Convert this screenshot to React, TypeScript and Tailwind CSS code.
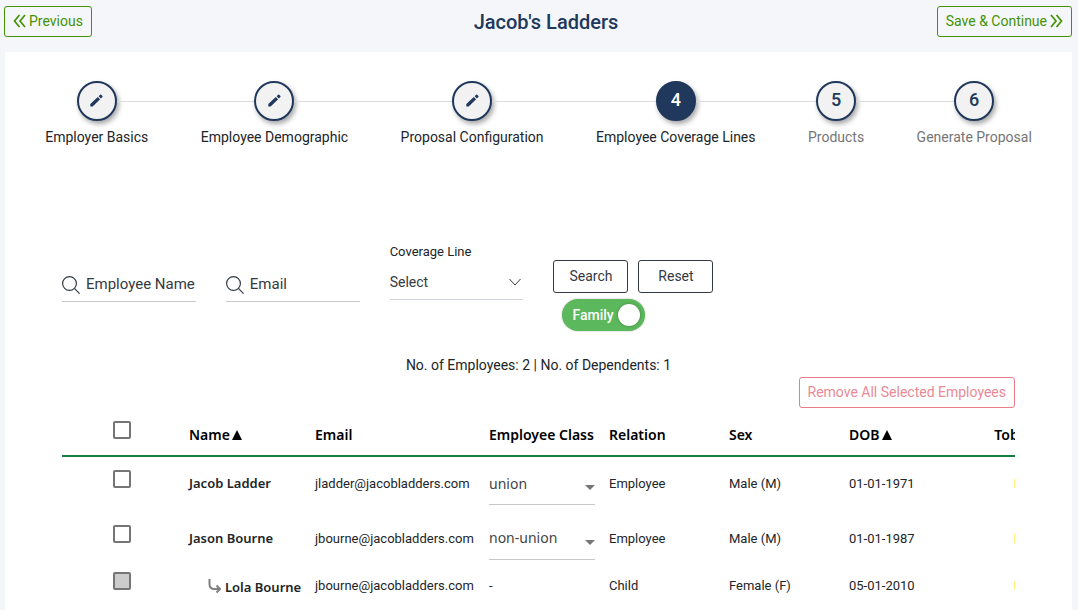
import { useState } from "react";
import { clsx } from "clsx";

type Step = {
  label: string;
  state: "done" | "active" | "upcoming";
};

type Member = {
  id: string;
  name: string;
  email: string;
  employeeClass?: string;
  relation: string;
  sex: string;
  dob: string;
  tobacco: string;
};

const STEPS: Step[] = [
  { label: "Employer Basics", state: "done" },
  { label: "Employee Demographic", state: "done" },
  { label: "Proposal Configuration", state: "done" },
  { label: "Employee Coverage Lines", state: "active" },
  { label: "Products", state: "upcoming" },
  { label: "Generate Proposal", state: "upcoming" },
];

const MEMBERS: Member[] = [
  { id: "1", name: "Jacob Ladder", email: "jladder@jacobladders.com", employeeClass: "union", relation: "Employee", sex: "Male (M)", dob: "01-01-1971", tobacco: "No" },
  { id: "2", name: "Jason Bourne", email: "jbourne@jacobladders.com", employeeClass: "non-union", relation: "Employee", sex: "Male (M)", dob: "01-01-1987", tobacco: "No" },
  { id: "3", name: "Lola Bourne", email: "jbourne@jacobladders.com", relation: "Child", sex: "Female (F)", dob: "05-01-2010", tobacco: "No" },
];

function DoubleChevron({ className }: { className?: string }) {
  return (
    <svg viewBox="0 0 13 14" className={clsx("h-3.5 w-[13px]", className)} fill="none" stroke="currentColor" strokeWidth="1.7" aria-hidden="true">
      <path d="M6.5 1 1.5 7l5 6M12 1 7 7l5 6" />
    </svg>
  );
}

function PencilIcon() {
  return (
    <svg viewBox="0 0 13 13" className="h-[13px] w-[13px]" fill="currentColor" aria-hidden="true">
      <path d="M.3 12.600V10L7.800 3l2.300 2.300-7.400 7.300z" />
      <path d="m8.600 2.300 1.500-1.500q.6-.5 1.200 0l1.100 1.100q.5.600 0 1.200l-1.500 1.500z" />
    </svg>
  );
}

function SearchIcon() {
  return (
    <svg viewBox="0 0 18 18" className="h-[18px] w-[18px] shrink-0" fill="none" stroke="#343a40" strokeWidth="1.2" aria-hidden="true">
      <circle cx="7.5" cy="7.5" r="6.9" />
      <path d="m12.4 12.4 5.2 5.2" />
    </svg>
  );
}

function SortArrow() {
  return (
    <svg viewBox="0 0 10 10" className="ml-0.5 inline-block h-2.5 w-2.5 align-baseline" fill="currentColor" aria-hidden="true">
      <path d="M5 0l5 10H0z" />
    </svg>
  );
}

function Stepper() {
  return (
    <ol className="flex px-3.5 pt-[29px]">
      {STEPS.map((step, i) => (
        <li key={step.label} className="flex flex-auto flex-col items-center">
          <div className="flex w-full items-center">
            <div className={clsx("h-px flex-1", i > 0 && "bg-[#dcdcdc]")} />
            <div
              className={clsx(
                "flex h-10 w-10 items-center justify-center rounded-full border-2 border-[#20385b] pb-0.5 text-lg font-medium shadow-[2px_3px_5px_rgba(0,0,0,0.35)]",
                step.state === "active" ? "bg-[#20385b] text-white" : "bg-[#f2f2f2] text-[#20385b]"
              )}
            >
              {step.state === "done" ? <PencilIcon /> : i + 1}
            </div>
            <div className={clsx("h-px flex-1", i < STEPS.length - 1 && "bg-[#dcdcdc]")} />
          </div>
          <span
            className={clsx(
              "mt-1.5 px-6 text-sm whitespace-nowrap",
              step.state === "upcoming" ? "text-[#757575]" : "text-[#212529]"
            )}
          >
            {step.label}
          </span>
        </li>
      ))}
    </ol>
  );
}

function SearchField({ label }: { label: string }) {
  return (
    <label className="mt-[26px] flex h-[34px] items-center gap-1.5 border-b border-[#c8c8c8]">
      <SearchIcon />
      <input
        type="text"
        aria-label={label}
        placeholder={label}
        className="w-full min-w-0 bg-transparent text-[15px] text-[#343a40] outline-none placeholder:text-[#343a40]"
      />
    </label>
  );
}

function Filters() {
  const [family, setFamily] = useState(true);

  return (
    <form className="mt-[95px] grid grid-cols-6 items-start gap-x-[30px]" onSubmit={(e) => e.preventDefault()}>
      <SearchField label="Employee Name" />
      <SearchField label="Email" />
      <div>
        <label htmlFor="coverage-line" className="block text-[13px] leading-5">
          Coverage Line
        </label>
        <div className="relative mt-0.5">
          <select id="coverage-line" className="h-9 w-full appearance-none border-b border-[#ced4da] bg-transparent text-sm text-[#343a40] outline-none">
            <option>Select</option>
          </select>
          <svg viewBox="0 0 12 8" className="pointer-events-none absolute top-3.5 right-0.5 h-2 w-3" fill="none" stroke="#343a40" aria-hidden="true">
            <path d="m.5 1 5.5 6 5.5-6" />
          </svg>
        </div>
      </div>
      <div className="col-span-2 flex flex-col items-start pt-[18px]">
        <div className="flex gap-2.5">
          <button type="submit" className="h-[33px] w-[75px] rounded-[3px] border border-[#343a40] pb-0.5 text-sm text-[#343a40]">
            Search
          </button>
          <button type="reset" className="h-[33px] w-[75px] rounded-[3px] border border-[#343a40] pb-0.5 text-sm text-[#343a40]">
            Reset
          </button>
        </div>
        <label className="mt-1.5 ml-[9px] flex h-8 w-[83px] cursor-pointer items-center justify-between rounded-full bg-[#5cb85c] pr-[5px] pl-2.5 text-sm font-medium text-white shadow-[0_0_2px_rgba(0,0,0,0.3)]">
          Family
          <input
            type="checkbox"
            role="switch"
            checked={family}
            onChange={(e) => setFamily(e.target.checked)}
            className="h-[22px] w-[22px] appearance-none rounded-full bg-white shadow-[0_0_3px_rgba(0,0,0,0.3)]"
          />
        </label>
      </div>
    </form>
  );
}

function RowCheckbox({ label, disabled }: { label: string; disabled?: boolean }) {
  return (
    <input
      type="checkbox"
      aria-label={label}
      disabled={disabled}
      className="block h-[18px] w-[18px] appearance-none rounded-xs border-2 border-[#757575] checked:bg-[#757575] disabled:bg-[#cccccc]"
    />
  );
}

function ClassSelect({ member }: { member: Member }) {
  return (
    <div className="relative w-[106px]">
      <select
        aria-label={`Employee class for ${member.name}`}
        defaultValue={member.employeeClass}
        className="h-[42px] w-full appearance-none border-b border-[#c8c8c8] bg-transparent font-['Noto_Sans',sans-serif] text-sm text-[#444444] outline-none"
      >
        <option>union</option>
        <option>non-union</option>
      </select>
      <svg viewBox="0 0 10 5" className="pointer-events-none absolute top-[22px] right-0 h-[5px] w-2.5" fill="#757575" aria-hidden="true">
        <path d="M0 0h10L5 5z" />
      </svg>
    </div>
  );
}

function MembersTable() {
  return (
    <div className="overflow-x-hidden">
      <table className="w-[1013px] table-fixed border-collapse text-left text-[13px]">
        <colgroup>
          <col className="w-[127px]" />
          <col className="w-[126px]" />
          <col className="w-[174px]" />
          <col className="w-[120px]" />
          <col className="w-[120px]" />
          <col className="w-[120px]" />
          <col className="w-[120px]" />
          <col className="w-[106px]" />
        </colgroup>
        <thead>
          <tr className="h-[42px] border-b-2 border-[#15803d] font-['Noto_Sans',sans-serif] text-sm text-black *:font-semibold">
            <th className="pb-2.5 pl-[51px]">
              <RowCheckbox label="Select all employees" />
            </th>
            <th>
              Name
              <SortArrow />
            </th>
            <th>Email</th>
            <th className="whitespace-nowrap">Employee Class</th>
            <th>Relation</th>
            <th>Sex</th>
            <th>
              DOB
              <SortArrow />
            </th>
            <th className="text-center">Tobacco</th>
          </tr>
        </thead>
        <tbody>
          {MEMBERS.map((member) => {
            const dependent = !member.employeeClass;
            return (
              <tr key={member.id} className={dependent ? "h-10" : "h-[55px]"}>
                <td className="pb-2.5 pl-[51px]">
                  <RowCheckbox label={`Select ${member.name}`} disabled={dependent} />
                </td>
                <td className="font-['Noto_Sans',sans-serif] font-semibold whitespace-nowrap">
                  {dependent ? (
                    <span className="flex items-end gap-1 pl-[19px]">
                      <svg viewBox="0 0 13 15" className="mb-1 h-[15px] w-[13px]" fill="none" stroke="#808080" strokeWidth="2" aria-hidden="true">
                        <path d="M1.500 0v5q0 5 5 5H12M8.500 6.500 12 10l-3.500 3.500" />
                      </svg>
                      <span className="pt-1">{member.name}</span>
                    </span>
                  ) : (
                    member.name
                  )}
                </td>
                <td>{member.email}</td>
                <td>{dependent ? "-" : <ClassSelect member={member} />}</td>
                <td>{member.relation}</td>
                <td>{member.sex}</td>
                <td>{member.dob}</td>
                <td className="text-center text-[#ffc107]">{member.tobacco}</td>
              </tr>
            );
          })}
        </tbody>
      </table>
    </div>
  );
}

export default function App() {
  return (
    <div className="flex min-h-screen flex-col bg-[#f4f6fa] font-[Roboto,sans-serif] text-[#212529]">
      <header className="grid grid-cols-[1fr_auto_1fr] items-start pt-1.5 pr-1.5 pb-3.5 pl-1">
        <button type="button" className="flex h-[31px] items-center gap-[3px] justify-self-start rounded-[3px] border border-[#449203] px-2 pb-0.5 text-sm text-[#449203]">
          <DoubleChevron />
          Previous
        </button>
        <h1 className="pl-4 text-xl leading-8 font-medium text-[#20385b]">Jacob's Ladders</h1>
        <button type="button" className="flex h-[31px] items-center gap-[3px] justify-self-end rounded-[3px] border border-[#449203] px-2 pb-0.5 text-sm text-[#449203]">
          Save &amp; Continue
          <DoubleChevron className="rotate-180" />
        </button>
      </header>
      <main className="mr-1.5 ml-[5px] flex-1 bg-white">
        <Stepper />
        <div className="px-[57px]">
          <Filters />
          <p className="mt-6 text-center text-sm">No. of Employees: 2 | No. of Dependents: 1</p>
          <div className="mt-0.5 mb-1.5 flex justify-end">
            <button type="button" disabled className="h-[31px] rounded-[3px] border border-[#ea7b88] px-2 pb-0.5 text-sm text-[#ea8a96]">
              Remove All Selected Employees
            </button>
          </div>
          <MembersTable />
        </div>
      </main>
    </div>
  );
}
